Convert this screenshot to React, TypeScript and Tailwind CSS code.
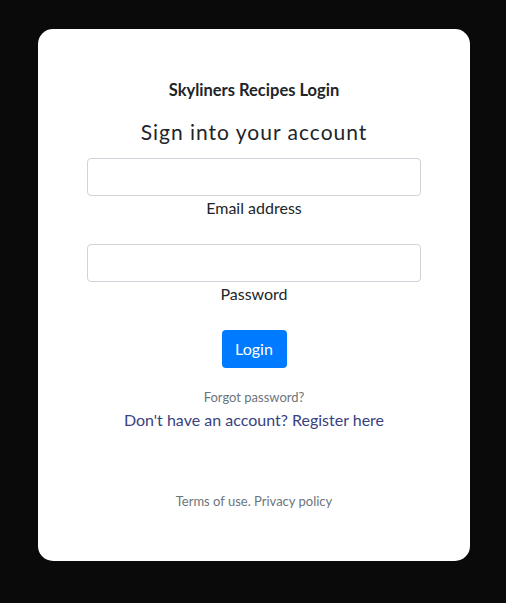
export default function App() {
  return (
    <div className="min-h-[603px] w-full bg-[#0a0a0a] pt-[29px] pb-[42px]" style={{ fontFamily: "Lato, 'Noto Sans', sans-serif" }}>
      <div className="ml-[38px] flex h-[532px] w-[432px] flex-col items-center rounded-[15px] bg-white">
        <div className="mt-[51px] text-[16.5px] font-bold leading-[20px] text-[#212529]">Skyliners Recipes Login</div>
        <div className="mt-[20px] text-[21px] leading-[24px] tracking-[1px] text-[#212529]">Sign into your account</div>
        <input className="mt-[14px] h-[38px] w-[334px] rounded-[4px] border border-[#ced4da] bg-white px-3" />
        <label className="mt-0 text-[16px] leading-[24px] text-[#212529]">Email address</label>
        <input type="password" className="mt-[24px] h-[38px] w-[334px] rounded-[4px] border border-[#ced4da] bg-white px-3" />
        <label className="mt-0 text-[16px] leading-[24px] text-[#212529]">Password</label>
        <button className="mt-[24px] h-[38px] w-[65px] rounded-[4px] bg-[#007bff] text-[16px] text-white">Login</button>
        <a className="mt-[21px] text-[13px] leading-[16px] text-[#6c757d]">Forgot password?</a>
        <p className="mt-[3px] text-[16px] leading-[24px] text-[#393f81]">Don't have an account? Register here</p>
        <div className="mt-[61px] text-[13px] leading-[16px] text-[#6c757d]">Terms of use. Privacy policy</div>
      </div>
    </div>
  );
}
